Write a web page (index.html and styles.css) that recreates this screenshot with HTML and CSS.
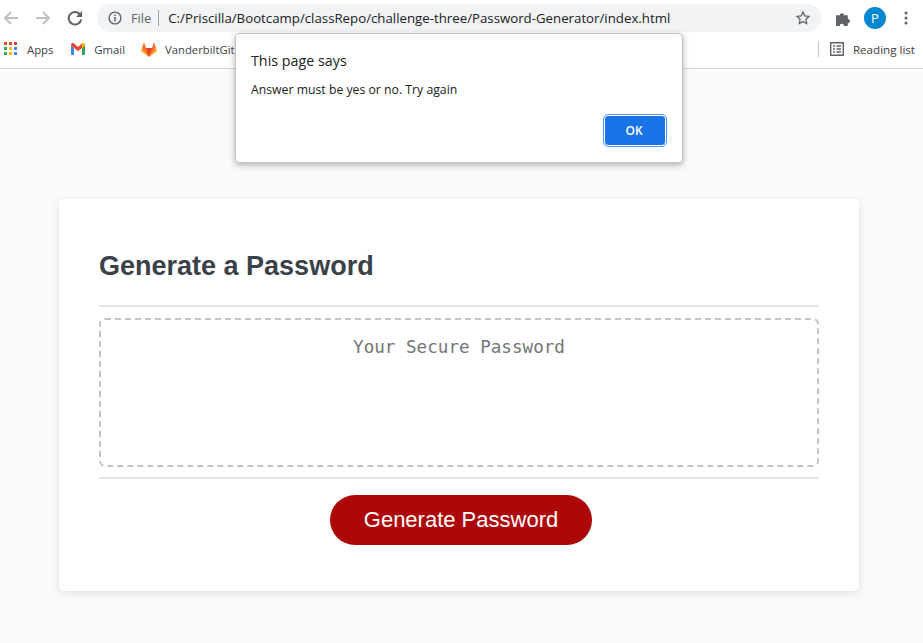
FILE: index.html
```html
<!DOCTYPE html>
<html lang="en">
<head>
    <meta charset="UTF-8">
    <meta name="viewport" content="width=device-width, initial-scale=1.0">
    <title>Password Generator</title>
    <link rel="stylesheet" href="styles.css">
</head>
<body>
    <header class="chrome">
        <div class="toolbar">
            <svg class="nav-icon" width="16" height="16" viewBox="0 0 16 16"><path d="M15 8H2M8 2L2 8l6 6" fill="none" stroke="#bdc1c6" stroke-width="2"/></svg>
            <svg class="nav-icon" width="16" height="16" viewBox="0 0 16 16"><path d="M1 8h13M8 2l6 6-6 6" fill="none" stroke="#bdc1c6" stroke-width="2"/></svg>
            <svg class="nav-icon" width="16" height="16" viewBox="0 0 16 16"><path d="M13.2 4.600A6.300 6.300 0 1 0 14.200 9.500" fill="none" stroke="#5f6368" stroke-width="2"/><path d="M15 1v6H9z" fill="#5f6368"/></svg>
            <div class="omnibox">
                <svg width="14" height="14" viewBox="0 0 14 14"><circle cx="7" cy="7" r="5.900" fill="none" stroke="#5f6368" stroke-width="1.400"/><path d="M7 6v4.200M7 3.600v1.400" stroke="#5f6368" stroke-width="1.500"/></svg>
                <span class="scheme">File</span>
                <span class="url">C:/Priscilla/Bootcamp/classRepo/challenge-three/Password-Generator/index.html</span>
                <svg class="star" width="16" height="16" viewBox="0 0 16 16"><path d="M8 2l1.800 3.900 4.200.5-3.100 2.900.8 4.200L8 11.400l-3.700 2.100.8-4.200L2 6.400l4.200-.5z" fill="none" stroke="#5f6368" stroke-width="1.300"/></svg>
            </div>
            <svg class="puzzle" width="15" height="15" viewBox="1 1 14 14"><path d="M1 5h3.500a2 2 0 1 1 4 0H12v3.500a2 2 0 1 1 0 4V15H8.500a2 2 0 1 0-4 0H1z" fill="#5f6368"/></svg>
            <span class="avatar">P</span>
            <svg class="menu-dots" width="4" height="14" viewBox="0 0 4 14"><circle cx="2" cy="2" r="1.500" fill="#5f6368"/><circle cx="2" cy="7" r="1.500" fill="#5f6368"/><circle cx="2" cy="12" r="1.500" fill="#5f6368"/></svg>
        </div>
        <div class="bookmarks">
            <span class="bookmark apps">
                <svg width="14" height="14" viewBox="0 0 14 14">
                    <path d="M0 0h3v3H0z" fill="#ea4335"/><path d="M5 0h3v3H5z" fill="#ea4335"/><path d="M10 0h3v3h-3z" fill="#ea4335"/>
                    <path d="M0 5h3v3H0z" fill="#34a853"/><path d="M5 5h3v3H5z" fill="#fbbc05"/><path d="M10 5h3v3h-3z" fill="#4285f4"/>
                    <path d="M0 10h3v3H0z" fill="#34a853"/><path d="M5 10h3v3H5z" fill="#fbbc05"/><path d="M10 10h3v3h-3z" fill="#4285f4"/>
                </svg>
                Apps
            </span>
            <span class="bookmark gmail">
                <svg width="14" height="12" viewBox="0 0 14 12">
                    <path d="M0 2v9a1 1 0 0 0 1 1h2V5z" fill="#4285f4"/>
                    <path d="M14 2v9a1 1 0 0 1-1 1h-2V5z" fill="#34a853"/>
                    <path d="M0 2l3 3 4 3 4-3 3-3c0-2-2-2.500-3-1.500L7 4 3 .5C2-.5 0 0 0 2z" fill="#ea4335"/>
                    <path d="M11 5l3-3c0-2-2-2.500-3-1.500z" fill="#fbbc05"/>
                </svg>
                Gmail
            </span>
            <span class="bookmark gitlab">
                <svg width="16" height="15" viewBox="0 0 16 15">
                    <path d="M8 15L0 9l1-3 7 9 7-9 1 3z" fill="#fca326"/>
                    <path d="M8 15L1 6l2-6 2 6h6l2-6 2 6z" fill="#fc6d26"/>
                    <path d="M8 15L5 6h6z" fill="#e24329"/>
                </svg>
                VanderbiltGitLab
            </span>
            <span class="reading-list">
                <svg width="14" height="14" viewBox="0 0 14 14"><path d="M.7.7h12.600v12.600H.7z" fill="none" stroke="#5f6368" stroke-width="1.400"/><path d="M3 4h2M3 7h2M3 10h2M6.500 4H11M6.500 7H11M6.500 10H11" stroke="#5f6368" stroke-width="1.300"/></svg>
                Reading list
            </span>
        </div>
    </header>

    <div class="alert-box">
        <p class="alert-title">This page says</p>
        <p class="alert-text">Answer must be yes or no. Try again</p>
        <div class="alert-actions">
            <button class="alert-ok" type="button">OK</button>
        </div>
    </div>

    <main class="page">
        <section class="card">
            <h2 class="card-title">Generate a Password</h2>
            <div class="card-body">
                <textarea class="password" placeholder="Your Secure Password" readonly></textarea>
            </div>
            <div class="card-footer">
                <button class="generate" type="button">Generate Password</button>
            </div>
        </section>
    </main>
</body>
</html>
```

FILE: styles.css
```css
html, body {
    margin: 0;
    padding: 0;
    height: 100%;
    overflow: hidden;
}
body {
    position: relative;
    background-color: #f9fafc;
    font-family: "Open Sans", "Noto Sans", sans-serif;
}
.chrome {
    height: 68px;
    background-color: white;
    border-bottom: 1px solid #d9d9d9;
}
.toolbar {
    display: flex;
    align-items: center;
    height: 28px;
    padding: 4px 0 0 3px;
}
.nav-icon {
    margin-right: 16px;
    flex: none;
}
.omnibox {
    display: flex;
    align-items: center;
    width: 724px;
    height: 28px;
    margin-left: -2px;
    padding: 0 10px 0 11px;
    box-sizing: border-box;
    background-color: #f1f3f4;
    border-radius: 14px;
    font-size: 13.250px;
}
.scheme {
    color: #5f6368;
    font-size: 12.800px;
    margin-left: 9px;
    padding-right: 7px;
    border-right: 1px solid #9aa0a6;
    line-height: 16px;
}
.url {
    color: #202124;
    margin-left: 9px;
    white-space: nowrap;
}
.star {
    margin-left: auto;
}
.puzzle {
    margin-left: 15px;
}
.avatar {
    display: flex;
    align-items: center;
    justify-content: center;
    width: 22px;
    height: 22px;
    margin-left: 13px;
    border-radius: 50%;
    background-color: #0288d1;
    color: white;
    font-size: 13px;
}
.menu-dots {
    margin-left: 18px;
}
.bookmarks {
    display: flex;
    align-items: center;
    height: 28px;
    margin-top: 3px;
    padding: 0 8px 0 4px;
    font-size: 11.300px;
    color: #3c4043;
}
.bookmark {
    display: flex;
    align-items: center;
    gap: 9px;
    white-space: nowrap;
}
.apps {
    margin-right: 18px;
}
.gmail {
    margin-right: 16px;
}
.gitlab {
    gap: 8px;
}
.reading-list {
    display: flex;
    align-items: center;
    gap: 9px;
    margin-left: auto;
    padding-left: 11px;
    border-left: 1px solid #c6c9cc;
    height: 16px;
    font-size: 11.600px;
}
.alert-box {
    position: absolute;
    left: 235px;
    top: 33px;
    width: 448px;
    height: 130px;
    box-sizing: border-box;
    padding: 18px 15px 0;
    background-color: white;
    border: 1px solid #c4c4c4;
    border-radius: 4px;
    box-shadow: 0 2px 6px rgba(0,0,0,0.3);
}
.alert-title {
    margin: 0;
    font-size: 14.300px;
    line-height: 18px;
    color: #202124;
}
.alert-text {
    margin: 12px 0 0;
    font-size: 12.250px;
    line-height: 16px;
    color: #202124;
}
.alert-actions {
    display: flex;
    justify-content: flex-end;
    margin-top: 17px;
}
.alert-ok {
    width: 62px;
    height: 31px;
    margin-right: 1px;
    padding: 0 2px 0 0;
    background-color: #1a73e8;
    color: white;
    border: 1px solid white;
    outline: 1px solid #5b96ee;
    border-radius: 4px;
    font-family: inherit;
    font-size: 12px;
    font-weight: 600;
}
.page {
    padding-top: 130px;
}
.card {
    width: 800px;
    height: 392px;
    margin-left: 59px;
    padding: 40px;
    box-sizing: border-box;
    background-color: white;
    border-radius: 5px;
    box-shadow: 0 2px 8px rgba(0,0,0,0.1);
}
.card-title {
    margin: 0;
    height: 66px;
    font-family: "Liberation Sans", Arial, sans-serif;
    font-size: 27px;
    line-height: 54px;
    color: #3a4149;
    border-bottom: 2px solid #e6e6e6;
}
.card-body {
    padding: 11px 0 10px;
}
.password {
    display: block;
    width: 100%;
    height: 149px;
    box-sizing: border-box;
    padding: 17px 16px 16px;
    border: 2px dashed #c0c4cc;
    border-radius: 6px;
    background: white;
    font-family: "DejaVu Sans Mono", monospace;
    font-size: 17.600px;
    text-align: center;
    resize: none;
    outline: none;
}
.password::placeholder {
    color: #757575;
}
.card-footer {
    display: flex;
    justify-content: center;
    padding-top: 16px;
    border-top: 2px solid #e6e6e6;
}
.generate {
    width: 262px;
    height: 50px;
    margin-left: 4px;
    background-color: #ae0707;
    color: white;
    border: none;
    border-radius: 25px;
    font-family: "Liberation Sans", Arial, sans-serif;
    font-size: 22px;
}
```
